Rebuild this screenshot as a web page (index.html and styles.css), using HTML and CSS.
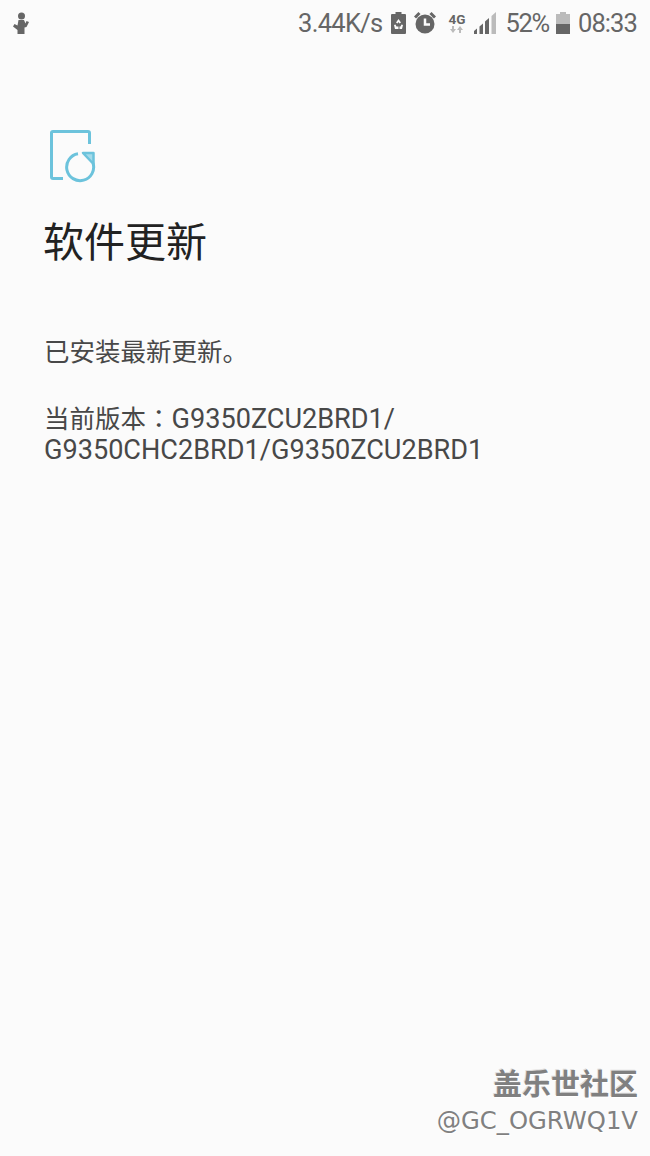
FILE: index.html
```html
<!DOCTYPE html>
<html lang="zh-CN">

    <head>
        <meta charset="UTF-8">
        <meta name="viewport" content="width=device-width, initial-scale=1.0">
        <title>软件更新</title>
        <link rel="stylesheet" href="styles.css">
    </head>

    <body>
        <div class="screen">
            <header class="status">
                <svg class="status_runner" viewBox="0 0 18 22" width="18" height="22">
                    <circle cx="9.500" cy="4" r="3.500" />
                    <path d="M6.500 8h5.500l1.500 3.500 1-2.500 2.500 1-2.500 5-2 .5V22H5.500v-4L1 14.500 2.500 12l3 1.500z" />
                </svg>
                <div class="status_right">
                    <span class="status_text">3.44K/s</span>
                    <svg class="status_icon battery-saver" viewBox="0 0 15 22" width="15" height="22">
                        <path d="M4.500 0h6v2H14a1 1 0 0 1 1 1v18a1 1 0 0 1-1 1H1a1 1 0 0 1-1-1V3a1 1 0 0 1 1-1h3.500z" />
                        <path class="cut" d="M7.500 7l2.500 3.500-1.500 1-1-1.500-1 1.500-1.500-1zM3 13l1.500-.5 1 2h2v2.500H4zM12 13l-1.500-.5-1 2H8.500v2.500H11z" />
                    </svg>
                    <svg class="status_icon alarm" viewBox="0 0 22 24" width="22" height="24">
                        <circle cx="11" cy="13" r="9.500" />
                        <path class="stroke" d="M1 6.500 5.500 2M21 6.500 16.500 2" />
                        <path class="cut-stroke" d="M11 7.500V13.500H16" />
                    </svg>
                    <div class="net">
                        <span class="net_label">4G</span>
                        <svg viewBox="0 0 14 7" width="14" height="7">
                            <path class="net_down" d="M2 0h2v3h2L3 7 0 3h2z" />
                            <path class="net_up" d="M11 7H9V4H7l3-4 3 4h-2z" />
                        </svg>
                    </div>
                    <svg class="status_icon signal" viewBox="0 0 22 22" width="22" height="22">
                        <path d="M0 19l3-2.500V22H0z" />
                        <path d="M5.500 14.500l3.500-3V22H5.500z" />
                        <path d="M11 9.500l4-3.500V22h-4z" />
                        <path class="dim" d="M17.500 4L22 0v22h-4.500z" />
                    </svg>
                    <span class="status_text status_percent">52%</span>
                    <svg class="status_icon battery" viewBox="0 0 14 22" width="14" height="22">
                        <path class="dim" d="M4 0h6v2h4v10H0V2h4z" />
                        <rect y="12" width="14" height="10" />
                    </svg>
                    <span class="status_text status_time">08:33</span>
                </div>
            </header>

            <main class="main">
                <svg class="main_icon" viewBox="0 0 48 56" width="48" height="56">
                    <path d="M15 50.500H5a1.500 1.500 0 0 1-1.500-1.500V5A1.500 1.500 0 0 1 5 3.500h35A1.500 1.500 0 0 1 41.500 5v11" />
                    <path d="M30 25.800A13.500 13.500 0 1 0 45 35" />
                    <path class="arrow" d="M35 25h10.500V36z" />
                </svg>
                <h1 class="main_heading">软件更新</h1>
                <p class="main_text">已安装最新更新。</p>
                <p class="main_text main_version">当前版本<span class="main_colon" lang="zh-Hant">：</span><span class="main_code">G9350ZCU2BRD1/<br>G9350CHC2BRD1/G9350ZCU2BRD1</span></p>
            </main>

            <footer class="mark">
                <p class="mark_name">盖乐世社区</p>
                <p class="mark_user">@GC_OGRWQ1V</p>
            </footer>
        </div>
    </body>

</html>
```

FILE: styles.css
```css
* {
    box-sizing: border-box;
    margin: 0;
    padding: 0;
}

html,
body {
    height: 100%;
}

body {
    background-color: #fbfbfb;
    font-family: Roboto, "Noto Sans CJK SC", sans-serif;
    color: #484848;
}

.screen {
    height: 1156px;
    display: flex;
    flex-direction: column;
    overflow: hidden;
}

/* status bar */
.status {
    height: 44px;
    padding: 2px 13px 0 12px;
    display: flex;
    align-items: center;
    justify-content: space-between;
    color: #666;
    flex: none;
}

.status svg {
    fill: #666;
    display: block;
}

.status_right {
    display: flex;
    align-items: center;
}

.status_text {
    font-size: 25.500px;
    letter-spacing: -0.700px;
    line-height: 44px;
}

.status_icon {
    margin-left: 9px;
}

.status .dim {
    fill: #bbb;
}

.status .cut {
    fill: #fbfbfb;
}

.status .stroke {
    fill: none;
    stroke: #666;
    stroke-width: 3;
}

.status .cut-stroke {
    fill: none;
    stroke: #fbfbfb;
    stroke-width: 2.500;
}

.alarm {
    margin-left: 8px;
}

.net {
    margin-left: 13px;
    width: 17px;
    display: flex;
    flex-direction: column;
    align-items: center;
    gap: 1px;
}

.net_label {
    font-size: 13.500px;
    font-weight: 700;
    line-height: 12px;
}

.status .net_down,
.status .net_up {
    fill: #bbb;
}

.signal {
    margin-left: 8px;
}

.status_percent {
    margin-left: 10px;
    letter-spacing: -1.300px;
}

.battery {
    margin-left: 7px;
}

.status_time {
    margin-left: 8px;
    letter-spacing: -0.900px;
}

.battery-saver {
    margin-left: 8px;
}

/* main content */
.main {
    padding: 84px 43px 0;
    flex: 1;
}

.main_icon {
    display: block;
    margin-left: 5px;
    fill: none;
    stroke: #6cc3dc;
    stroke-width: 3;
}

.main_icon .arrow {
    fill: #a5dbea;
    stroke-width: 2.500;
    stroke-linejoin: round;
}

.main_heading {
    margin-top: 29px;
    font-size: 41px;
    font-weight: 400;
    line-height: 60px;
    color: #222;
}

.main_text {
    font-size: 25.500px;
    line-height: 35px;
    margin-top: 62px;
    margin-left: 1px;
}

.main_version {
    margin-top: 31px;
    line-height: 31px;
}

.main_colon {
    font-family: "Noto Sans CJK TC", sans-serif;
}

.main_code {
    font-size: 27.100px;
}

/* watermark */
.mark {
    padding: 0 12px 18px 0;
    text-align: right;
    flex: none;
}

.mark_name {
    font-size: 29px;
    font-weight: 700;
    line-height: 37px;
    color: #808080;
    text-shadow: 1px 1px 0 #fff, -1px -1px 0 #ddd;
}

.mark_user {
    font-family: "DejaVu Sans", sans-serif;
    font-size: 24.300px;
    line-height: 34px;
    color: #808080;
    text-shadow: 1px 1px 0 #fff;
}
```
